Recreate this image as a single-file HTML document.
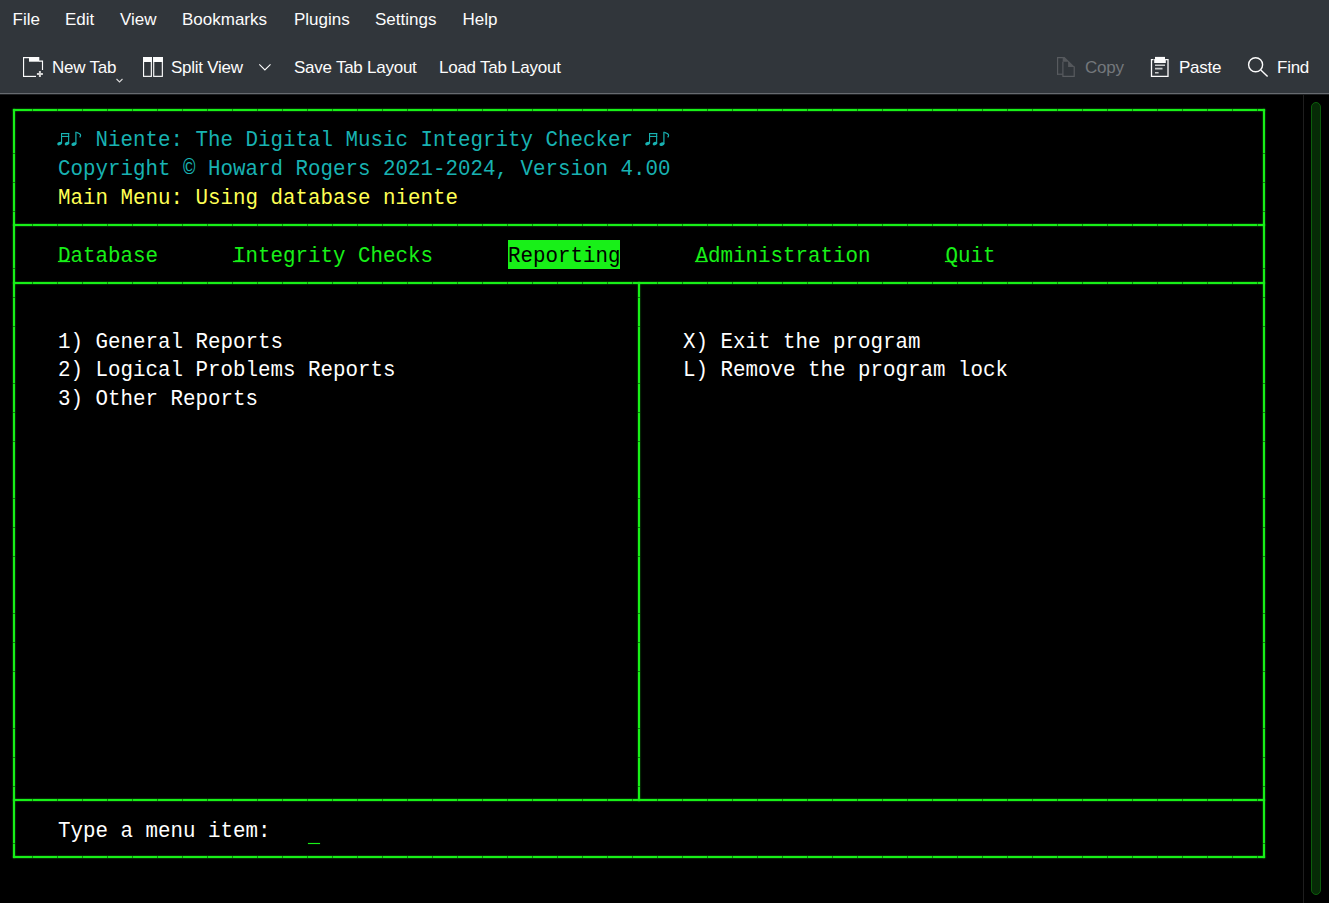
<!DOCTYPE html>
<html><head><meta charset="utf-8">
<style>
*{margin:0;padding:0;box-sizing:border-box}
html,body{width:1329px;height:903px;overflow:hidden;background:#000}
body{position:relative;font-family:"Liberation Sans",sans-serif}
#top{position:absolute;left:0;top:0;width:1329px;height:93px;background:#31363b}
#sep{position:absolute;left:0;top:93px;width:1329px;height:1px;background:#676b70}
.m{position:absolute;top:7px;height:26px;line-height:26px;font-size:17px;letter-spacing:0px;color:#fcfcfc;white-space:pre}
.t{position:absolute;top:55px;height:26px;line-height:26px;font-size:17px;letter-spacing:-0.25px;color:#fcfcfc;white-space:pre}
.ic{position:absolute}
#term{position:absolute;left:0;top:94px;width:1329px;height:809px;background:#000}
.h{position:absolute;height:2px;background:#18f018;box-shadow:0 0 1.5px rgba(24,240,24,.9)}
.v{position:absolute;width:2px;background:#18f018;box-shadow:0 0 1.5px rgba(24,240,24,.9)}
.r{position:absolute;left:58px;height:28.75px;margin-top:2.75px;transform:scaleY(1.08);transform-origin:0 19.9px;line-height:28.75px;font-family:"Liberation Mono",monospace;font-size:20.833px;white-space:pre;color:#fff}
.cy{color:#18b2b2}.ye{color:#ffff54}.gr{color:#18f018}
.u{text-decoration:underline;text-underline-offset:3px;text-decoration-thickness:1px}
.hl{background:#18f018;color:#000}
</style></head><body>
<div id="top"></div>
<div id="sep"></div><div style="position:absolute;left:0;top:94px;width:1329px;height:1px;background:#1e2022;z-index:1"></div>
<div class="m" style="left:12.5px">File</div>
<div class="m" style="left:65px">Edit</div>
<div class="m" style="left:120px">View</div>
<div class="m" style="left:182px">Bookmarks</div>
<div class="m" style="left:294px">Plugins</div>
<div class="m" style="left:375px">Settings</div>
<div class="m" style="left:462.5px">Help</div>

<div class="t" style="left:52px">New Tab</div>
<div class="t" style="left:171px">Split View</div>
<div class="t" style="left:294px">Save Tab Layout</div>
<div class="t" style="left:439px">Load Tab Layout</div>
<div class="t" style="left:1085px;color:#74787c">Copy</div>
<div class="t" style="left:1179px">Paste</div>
<div class="t" style="left:1277px">Find</div>


<svg class="ic" style="left:23px;top:57px" width="21" height="21" viewBox="0 0 21 21" fill="none" stroke="#fcfcfc" stroke-width="1.15">
<path d="M0.55 20V0.55H6.5"/><rect x="6" y="0" width="10.3" height="4.7" fill="#fcfcfc" stroke="none"/><path d="M16 4.1H19.5V13"/><path d="M0 19.4H13"/>
<path d="M13.9 16.9H19.9M16.9 13.9V19.9" stroke="#d4d4d4" stroke-width="2"/></svg>
<svg class="ic" style="left:115px;top:78px" width="9" height="6" viewBox="0 0 9 6" fill="none" stroke="#fcfcfc" stroke-width="1.1"><path d="M1.5 1L4.5 4L7.5 1" stroke="#d8d8d8"/></svg>
<svg class="ic" style="left:143px;top:57px" width="21" height="21" viewBox="0 0 21 21" fill="none" stroke="#fcfcfc" stroke-width="1.15">
<rect x="0.55" y="0.55" width="7.8" height="18.8"/><rect x="10.7" y="0.55" width="8.65" height="18.8"/><rect x="0" y="0" width="8.9" height="5" fill="#fcfcfc" stroke="none"/><rect x="10.1" y="0" width="9.85" height="5" fill="#fcfcfc" stroke="none"/></svg>
<svg class="ic" style="left:257px;top:62px" width="16" height="11" viewBox="0 0 16 11" fill="none" stroke="#fcfcfc" stroke-width="1.1"><path d="M2.3 2.4L7.9 8L13.5 2.4"/></svg>
<svg class="ic" style="left:1050px;top:52px" width="30" height="30" viewBox="0 0 30 30" fill="none" stroke="#595c60" stroke-width="1.15">
<path d="M7.6 22.8V5.6H13"/><path d="M7 22.2H12.7"/>
<path d="M12.7 5H14.6L24.8 15H18.1V9.8H12.7Z" fill="#55585c" stroke="none"/>
<path d="M12.9 9.8V24.4H24.2V14.6"/></svg>
<svg class="ic" style="left:1150px;top:56px" width="20" height="22" viewBox="0 0 20 22" fill="none" stroke="#fcfcfc" stroke-width="1.3">
<path d="M3.5 3.6H1.5V20.3H18V3.6H15.5"/><rect x="5" y="0.9" width="10" height="2.5" fill="#fcfcfc" stroke="none"/><rect x="4.2" y="3" width="11.6" height="4" fill="#fcfcfc" stroke="none"/>
<path d="M5 9.2H15M5 12.6H12.5M5 16.7H8.6" stroke="#c8c9ca" stroke-width="1.6"/></svg>
<svg class="ic" style="left:1246px;top:55px" width="24" height="24" viewBox="0 0 24 24" fill="none" stroke="#fcfcfc" stroke-width="1.4">
<circle cx="9.6" cy="9.8" r="7"/><path d="M14.8 15L21.6 21.6"/></svg>
<div id="term"></div>
<!-- box lines -->
<div class="h" style="left:13px;top:109px;width:1252px;background:repeating-linear-gradient(to right,#18f018 0 19px,#0c8a0c 19px 20px,#18f018 20px 25px)"></div>
<div class="h" style="left:13px;top:224px;width:1252px;background:repeating-linear-gradient(to right,#18f018 0 19px,#0c8a0c 19px 20px,#18f018 20px 25px)"></div>
<div class="h" style="left:13px;top:282px;width:1252px;background:repeating-linear-gradient(to right,#18f018 0 19px,#0c8a0c 19px 20px,#18f018 20px 25px)"></div>
<div class="h" style="left:13px;top:799px;width:1252px;background:repeating-linear-gradient(to right,#18f018 0 19px,#0c8a0c 19px 20px,#18f018 20px 25px)"></div>
<div class="h" style="left:13px;top:856px;width:1252px;background:repeating-linear-gradient(to right,#18f018 0 19px,#0c8a0c 19px 20px,#18f018 20px 25px)"></div>
<div class="v" style="left:13px;top:109px;height:749px;background:repeating-linear-gradient(to bottom,#18f018 0 44px,#0c8a0c 44px 45px,#18f018 45px 73px,#0c8a0c 73px 74px,#18f018 74px 102px,#0c8a0c 102px 103px,#18f018 103px 115px)"></div>
<div class="v" style="left:1263px;top:109px;height:749px;background:repeating-linear-gradient(to bottom,#18f018 0 44px,#0c8a0c 44px 45px,#18f018 45px 73px,#0c8a0c 73px 74px,#18f018 74px 102px,#0c8a0c 102px 103px,#18f018 103px 115px)"></div>
<div class="v" style="left:638px;top:282px;height:519px;background:repeating-linear-gradient(to bottom,#18f018 0 15px,#0c8a0c 15px 16px,#18f018 16px 44px,#0c8a0c 44px 45px,#18f018 45px 101px,#0c8a0c 101px 102px,#18f018 102px 115px)"></div>

<div style="position:absolute;left:508px;top:240px;width:112px;height:29px;background:#18f018"></div>
<div class="h" style="left:57.5px;top:260.5px;width:12px;height:1.5px"></div>
<div class="h" style="left:232.5px;top:260.5px;width:12px;height:1.5px"></div>
<div class="h" style="left:695px;top:260.5px;width:12px;height:1.5px"></div>
<div class="h" style="left:945px;top:260.5px;width:12px;height:1.5px"></div>
<!-- text rows: top = 96.25 + r*28.75 -->
<div class="r cy" style="top:124px">   Niente: The Digital Music Integrity Checker</div>
<div class="r cy" style="top:153px">Copyright © Howard Rogers 2021-2024, Version 4.00</div>
<div class="r ye" style="top:182.5px">Main Menu: Using database niente</div>
<div class="r gr" style="top:240px">Database      Integrity Checks      <span style="color:#000">Reporting</span>      Administration      Quit</div>
<div class="r" style="top:326.25px">1) General Reports</div>
<div class="r" style="top:354px">2) Logical Problems Reports</div>
<div class="r" style="top:382.75px">3) Other Reports</div>
<div class="r" style="top:326.25px;left:683px">X) Exit the program</div>
<div class="r" style="top:354px;left:683px">L) Remove the program lock</div>
<div class="r" style="top:814.75px">Type a menu item:</div>
<div style="position:absolute;left:308px;top:843px;width:12px;height:1px;background:#18f018;box-shadow:0 0 1px rgba(24,240,24,.9)"></div>

<svg style="position:absolute;left:57px;top:131px" width="25" height="16" viewBox="0 0 25 16" fill="#18b2b2">
<ellipse cx="2.6" cy="12.6" rx="2.4" ry="1.6" transform="rotate(-20 2.6 12.6)"/><rect x="4" y="2" width="1.1" height="10.5"/>
<ellipse cx="10" cy="12.6" rx="2.4" ry="1.6" transform="rotate(-20 10 12.6)"/><rect x="11.1" y="2" width="1.1" height="10.5"/>
<rect x="4" y="2" width="8.2" height="1.2"/><rect x="4" y="4.9" width="8.2" height="1.1"/>
<ellipse cx="16.9" cy="13.2" rx="2.6" ry="1.7" transform="rotate(-20 16.9 13.2)"/><rect x="18.3" y="0.75" width="1.2" height="12.3"/>
<path d="M19.3 1.3Q23.4 2.4 23.6 4.2Q23.6 5.2 22.7 6.4" fill="none" stroke="#18b2b2" stroke-width="1.2"/></svg>
<svg style="position:absolute;left:644.5px;top:131px" width="25" height="16" viewBox="0 0 25 16" fill="#18b2b2">
<ellipse cx="2.6" cy="12.6" rx="2.4" ry="1.6" transform="rotate(-20 2.6 12.6)"/><rect x="4" y="2" width="1.1" height="10.5"/>
<ellipse cx="10" cy="12.6" rx="2.4" ry="1.6" transform="rotate(-20 10 12.6)"/><rect x="11.1" y="2" width="1.1" height="10.5"/>
<rect x="4" y="2" width="8.2" height="1.2"/><rect x="4" y="4.9" width="8.2" height="1.1"/>
<ellipse cx="16.9" cy="13.2" rx="2.6" ry="1.7" transform="rotate(-20 16.9 13.2)"/><rect x="18.3" y="0.75" width="1.2" height="12.3"/>
<path d="M19.3 1.3Q23.4 2.4 23.6 4.2Q23.6 5.2 22.7 6.4" fill="none" stroke="#18b2b2" stroke-width="1.2"/></svg>
<!-- scrollbar -->
<div style="position:absolute;left:1303px;top:94px;width:1px;height:809px;background:#1e1e1e"></div>
<div style="position:absolute;left:1311px;top:102px;width:10px;height:793px;border-radius:5px;background:#062a06;border:1.5px solid #0b5e0b"></div>
</body></html>
